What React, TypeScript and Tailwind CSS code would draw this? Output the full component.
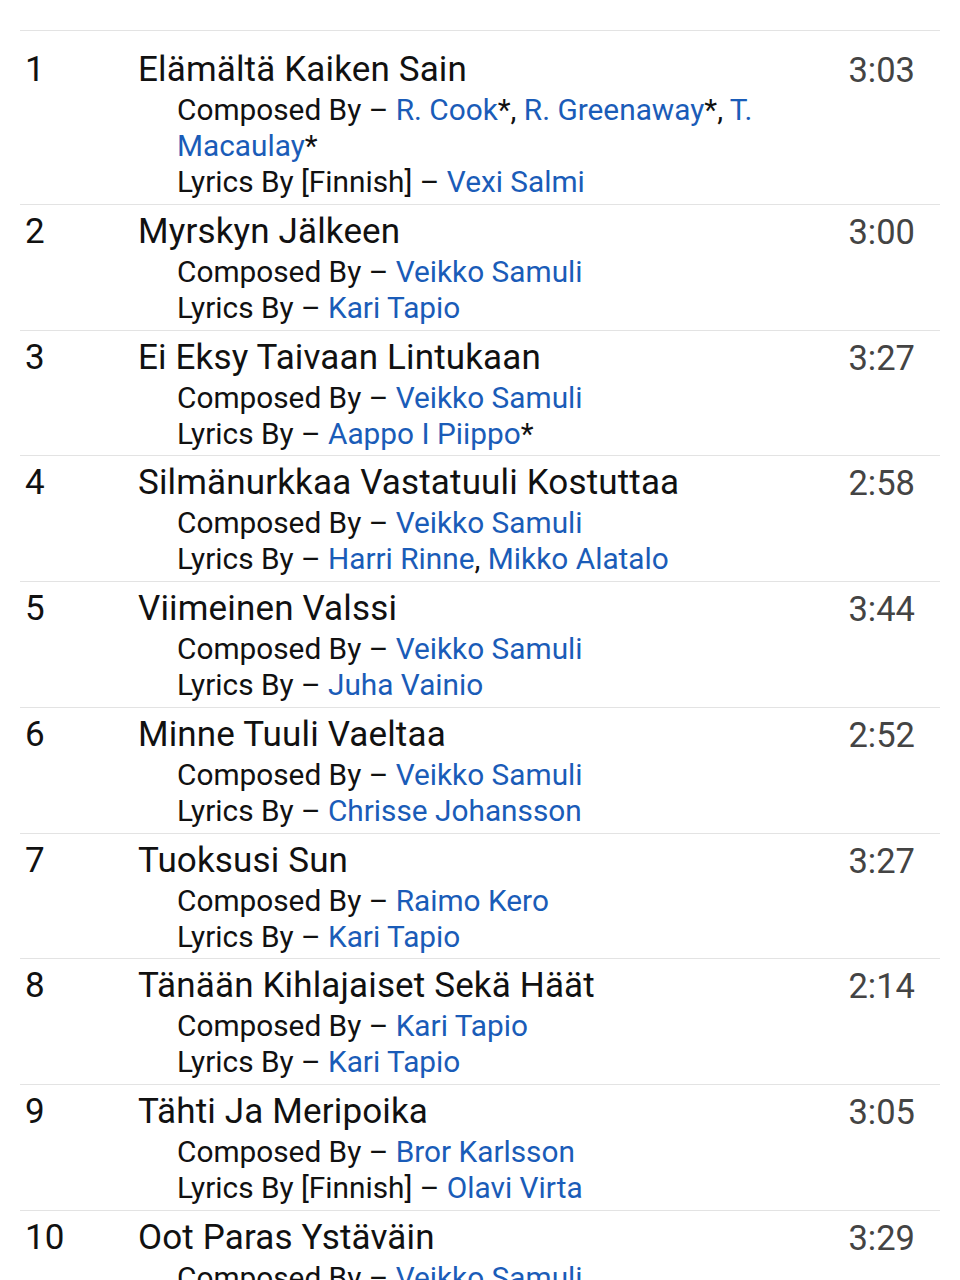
import React from 'react';

type Credit = { role: string; names: { name: string; star?: boolean }[] };

interface Track {
  pos: string;
  title: string;
  duration: string;
  credits: Credit[];
}

const tracks: Track[] = [
  {
    pos: '1',
    title: 'Elämältä Kaiken Sain',
    duration: '3:03',
    credits: [
      { role: 'Composed By', names: [{ name: 'R. Cook', star: true }, { name: 'R. Greenaway', star: true }, { name: 'T. Macaulay', star: true }] },
      { role: 'Lyrics By [Finnish]', names: [{ name: 'Vexi Salmi' }] },
    ],
  },
  {
    pos: '2',
    title: 'Myrskyn Jälkeen',
    duration: '3:00',
    credits: [
      { role: 'Composed By', names: [{ name: 'Veikko Samuli' }] },
      { role: 'Lyrics By', names: [{ name: 'Kari Tapio' }] },
    ],
  },
  {
    pos: '3',
    title: 'Ei Eksy Taivaan Lintukaan',
    duration: '3:27',
    credits: [
      { role: 'Composed By', names: [{ name: 'Veikko Samuli' }] },
      { role: 'Lyrics By', names: [{ name: 'Aappo I Piippo', star: true }] },
    ],
  },
  {
    pos: '4',
    title: 'Silmänurkkaa Vastatuuli Kostuttaa',
    duration: '2:58',
    credits: [
      { role: 'Composed By', names: [{ name: 'Veikko Samuli' }] },
      { role: 'Lyrics By', names: [{ name: 'Harri Rinne' }, { name: 'Mikko Alatalo' }] },
    ],
  },
  {
    pos: '5',
    title: 'Viimeinen Valssi',
    duration: '3:44',
    credits: [
      { role: 'Composed By', names: [{ name: 'Veikko Samuli' }] },
      { role: 'Lyrics By', names: [{ name: 'Juha Vainio' }] },
    ],
  },
  {
    pos: '6',
    title: 'Minne Tuuli Vaeltaa',
    duration: '2:52',
    credits: [
      { role: 'Composed By', names: [{ name: 'Veikko Samuli' }] },
      { role: 'Lyrics By', names: [{ name: 'Chrisse Johansson' }] },
    ],
  },
  {
    pos: '7',
    title: 'Tuoksusi Sun',
    duration: '3:27',
    credits: [
      { role: 'Composed By', names: [{ name: 'Raimo Kero' }] },
      { role: 'Lyrics By', names: [{ name: 'Kari Tapio' }] },
    ],
  },
  {
    pos: '8',
    title: 'Tänään Kihlajaiset Sekä Häät',
    duration: '2:14',
    credits: [
      { role: 'Composed By', names: [{ name: 'Kari Tapio' }] },
      { role: 'Lyrics By', names: [{ name: 'Kari Tapio' }] },
    ],
  },
  {
    pos: '9',
    title: 'Tähti Ja Meripoika',
    duration: '3:05',
    credits: [
      { role: 'Composed By', names: [{ name: 'Bror Karlsson' }] },
      { role: 'Lyrics By [Finnish]', names: [{ name: 'Olavi Virta' }] },
    ],
  },
  {
    pos: '10',
    title: 'Oot Paras Ystäväin',
    duration: '3:29',
    credits: [
      { role: 'Composed By', names: [{ name: 'Veikko Samuli' }] },
      { role: 'Lyrics By', names: [{ name: 'Kari Tapio' }] },
    ],
  },
];

const CreditLine: React.FC<{ credit: Credit }> = ({ credit }) => (
  <div className="pl-[39px] pr-[50px] text-[29.8px] leading-[36px] text-[#111]">
    {credit.role} –{' '}
    {credit.names.map((n, i) => (
      <React.Fragment key={i}>
        <a className="text-[#1a5cb8]">{n.name}</a>
        {n.star && '*'}
        {i < credit.names.length - 1 && ', '}
      </React.Fragment>
    ))}
  </div>
);

export default function App() {
  return (
    <div className="min-h-screen bg-white pt-[30px] font-['Roboto',sans-serif]">
      <div className="mx-[20px] border-t border-[#e3e3e3]">
        {tracks.map((t, idx) => (
          <div
            key={t.pos}
            className={`flex border-b border-[#e3e3e3] pb-[3.75px] pl-[5px] pr-[25px] ${idx === 0 ? 'pt-[17px]' : 'pt-[5px]'}`}
          >
            <div className="w-[113px] shrink-0 text-[35px] leading-[44px] text-[#111]">{t.pos}</div>
            <div className="min-w-0 flex-1">
              <div className="text-[35px] leading-[44px] tracking-[0.15px] text-[#111]">{t.title}</div>
              {t.credits.map((c, i) => (
                <CreditLine key={i} credit={c} />
              ))}
            </div>
            <div className="shrink-0 text-right text-[34.5px] leading-[44px] text-[#444]">{t.duration}</div>
          </div>
        ))}
      </div>
    </div>
  );
}
